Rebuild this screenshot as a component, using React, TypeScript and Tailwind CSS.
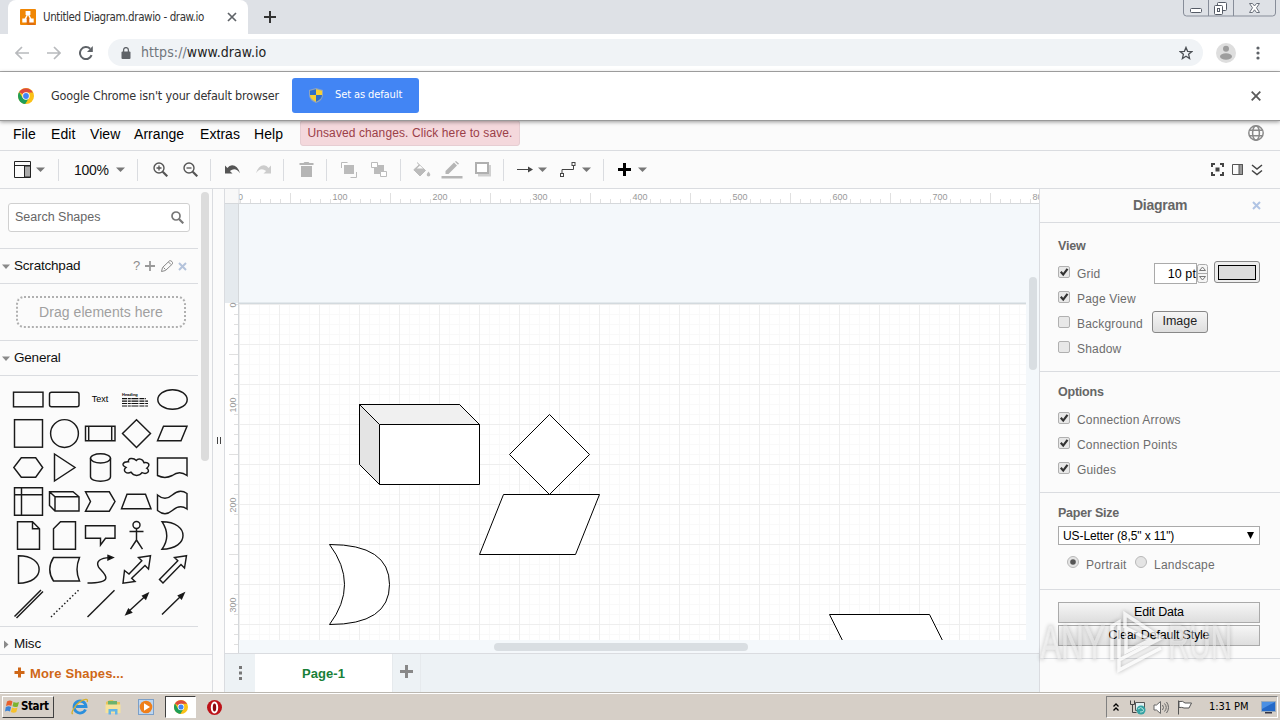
import React from "react";

const chromeFont = "font-['DejaVu_Sans_Condensed','DejaVu_Sans',sans-serif]";
const appFont = "font-['Liberation_Sans',Arial,sans-serif]";

const menus = [
  { label: "File", cls: "w-[38px]" },
  { label: "Edit", cls: "w-[39px]" },
  { label: "View", cls: "w-[44px]" },
  { label: "Arrange", cls: "w-[66px]" },
  { label: "Extras", cls: "w-[54px]" },
  { label: "Help", cls: "w-[46px]" },
];

const Caret = ({ className = "" }: { className?: string }) => (
  <svg width="9" height="5" viewBox="0 0 9 5" className={className}>
    <path d="M0 0.5h9L4.5 5z" fill="#777" />
  </svg>
);

const Sep = () => <div className="h-[22px] w-px shrink-0 bg-[#dadce0]" />;

const Tool = ({ cls, children }: { cls: string; children: React.ReactNode }) => (
  <div className={`flex h-full shrink-0 items-center ${cls}`}>{children}</div>
);

const ChromeLogo = ({ size }: { size: number }) => (
  <svg width={size} height={size} viewBox="0 0 16 16">
    <circle cx="8" cy="8" r="8" fill="#fbc116" />
    <path d="M8 8L1.1 4A8 8 0 0 1 14.9 4.4H8z" fill="#dd4b3e" />
    <path d="M1.1 4A8 8 0 0 0 7.2 16L11.1 9.8 8 8 4.7 10z" fill="#1e9e58" />
    <circle cx="8" cy="8" r="3.7" fill="#fff" />
    <circle cx="8" cy="8" r="2.9" fill="#4285f4" />
  </svg>
);

function TabStrip() {
  return (
    <div className="flex h-[34px] shrink-0 bg-[#dee1e6] pl-2">
      <div className="flex w-[240px] items-center rounded-t-lg bg-white pl-3">
        <svg width="16" height="16" viewBox="0 0 16 16">
          <rect width="16" height="16" rx="1" fill="#f08705" />
          <path d="M8 8l8 8H8L4 12z" fill="#df6c0c" />
          <path d="M8 4.5L4.5 11.5M8 4.5l3.5 7" stroke="#fff" strokeWidth="1.4" />
          <path d="M5.6 2h4.8v4H5.6zM2.3 9.5h4.4v4H2.3zM9.3 9.5h4.4v4H9.3z" fill="#fff" />
        </svg>
        <span className="ml-[7px] w-[182px] whitespace-nowrap pt-px text-[11.5px] tracking-[-0.4px] text-[#333]">
          Untitled Diagram.drawio - draw.io
        </span>
        <svg width="10" height="10" viewBox="0 0 10 10" className="ml-0.5">
          <path d="M1 1l8 8M9 1l-8 8" stroke="#5f6368" strokeWidth="1.7" />
        </svg>
      </div>
      <svg width="12" height="12" viewBox="0 0 12 12" className="ml-4 mt-[11px]">
        <path d="M6 0v12M0 6h12" stroke="#333" strokeWidth="2" />
      </svg>
      <svg width="93" height="17" viewBox="0 0 93 17" className="ml-auto mr-1" fill="none">
        <path d="M0.5 0v13q0 3 3 3h86q3 0 3-3V0M25.5 0v16M50.5 0v16" stroke="#878d99" />
        <rect x="7.5" y="8.5" width="11" height="4" rx="1" fill="#fff" stroke="#555b66" />
        <rect x="34.5" y="2.5" width="9" height="8" rx="1" fill="#fff" stroke="#555b66" />
        <rect x="31.5" y="5.5" width="8" height="9" rx="1" fill="#fff" stroke="#555b66" />
        <rect x="34.5" y="8.5" width="2" height="3" stroke="#555b66" />
        <path d="M66.5 3.5h3l2 2.5 2-2.5h3l-3 4.3 3 4.7h-3l-2-2.7-2 2.7h-3l3-4.7z" fill="#fff" stroke="#6a707b" />
      </svg>
    </div>
  );
}

function AddressBar() {
  return (
    <div className="flex h-[38px] shrink-0 items-center border-b border-[#adadad] bg-white pl-[15px]">
      <svg width="14" height="14" viewBox="0 0 14 14" fill="none" stroke="#b8babd" strokeWidth="1.7">
        <path d="M14 7H1M7 1L1 7l6 6" />
      </svg>
      <svg width="14" height="14" viewBox="0 0 14 14" fill="none" stroke="#b8babd" strokeWidth="1.7" className="ml-[18px]">
        <path d="M0 7h13M7 1l6 6-6 6" />
      </svg>
      <svg width="14" height="14" viewBox="0 0 14 14" fill="none" className="ml-[18px]">
        <path d="M12.6 9.2A6 6 0 1 1 11.2 2.8" stroke="#5f6368" strokeWidth="2" />
        <path d="M13.8 0v6H8z" fill="#5f6368" />
      </svg>
      <div className="ml-[15px] flex h-[27px] w-[1095px] items-center rounded-full bg-[#f0f3f6] pl-[13px]">
        <svg width="10" height="12" viewBox="0 0 10 12" fill="none">
          <rect x="0.5" y="4.5" width="9" height="7.5" rx="1" fill="#5f6368" />
          <path d="M2.6 5V3a2.4 2.4 0 0 1 4.8 0v2" stroke="#5f6368" strokeWidth="1.3" />
        </svg>
        <span className="ml-[10px] text-[14px] tracking-[0.08px] text-[#222]">
          <span className="text-[#71767c]">https://</span>www.draw.io
        </span>
        <svg width="14" height="14" viewBox="0 0 14 14" className="ml-auto mr-[10px]" fill="none">
          <path d="M7 1.4l1.6 3.9 4.2.3-3.2 2.7 1 4.2L7 10.2l-3.6 2.3 1-4.2L1.2 5.6l4.2-.3z" stroke="#4d5156" strokeWidth="1.3" />
        </svg>
      </div>
      <svg width="20" height="20" viewBox="0 0 20 20" className="ml-[13px]">
        <circle cx="10" cy="10" r="10" fill="#dedede" />
        <circle cx="10" cy="5.8" r="3" fill="#9d9d9d" />
        <ellipse cx="10" cy="13.5" rx="6" ry="3.2" fill="#9d9d9d" />
      </svg>
      <svg width="4" height="14" viewBox="0 0 4 14" fill="#5f6368" className="ml-[20px]">
        <circle cx="2" cy="2" r="1.6" />
        <circle cx="2" cy="7" r="1.6" />
        <circle cx="2" cy="12" r="1.6" />
      </svg>
    </div>
  );
}

function InfoBar() {
  return (
    <div className="relative z-10 flex h-[49px] shrink-0 items-center border-b border-[#999] bg-white pl-[18px] shadow-[0_1px_4px_rgba(0,0,0,0.4)]">
      <ChromeLogo size={16} />
      <span className="ml-[17px] w-[241px] whitespace-nowrap text-[12.5px] tracking-[-0.18px] text-[#333]">
        Google Chrome isn't your default browser
      </span>
      <button className="-mt-[2px] flex h-[35px] w-[127px] items-center rounded-[3px] bg-[#4285f4] pl-[17px] text-white">
        <svg width="14" height="15" viewBox="0 0 14 15">
          <path d="M7 0L0 2v5q0 5 7 8 7-3 7-8V2z" fill="#8fa3bd" />
          <path d="M7 1.2L1 2.8V7h6z" fill="#2f6fc8" />
          <path d="M7 1.2l6 1.6V7H7z" fill="#f7d034" />
          <path d="M1 7h6v6.8Q1 11 1 7z" fill="#f7d034" />
          <path d="M7 7h6q0 4-6 6.8z" fill="#2f6fc8" />
        </svg>
        <span className="ml-3 whitespace-nowrap text-[11px] tracking-[-0.1px]">Set as default</span>
      </button>
      <svg width="10" height="10" viewBox="0 0 10 10" className="ml-auto mr-[19px]">
        <path d="M0.7 0.7l8.6 8.6M9.3 0.7L0.7 9.3" stroke="#5a5a5a" strokeWidth="1.8" />
      </svg>
    </div>
  );
}

function MenuBar() {
  return (
    <div className="flex h-[30px] shrink-0 items-start border-b border-[#dadce0] bg-[#fbfbfb] pl-[13px] text-[14px] text-black">
      {menus.map((m) => (
        <span key={m.label} className={`${m.cls} pt-[3px] tracking-[0.05px]`}>
          {m.label}
        </span>
      ))}
      <span className="-mt-px flex h-[26px] w-[220px] items-center justify-center whitespace-nowrap rounded-[3px] border border-[#e6cdd2] bg-[#f4d8dc] text-[12px] tracking-[0.1px] text-[#9b4048]">
        Unsaved changes. Click here to save.
      </span>
      <svg width="16" height="16" viewBox="0 0 16 16" fill="none" stroke="#8a8a8a" strokeWidth="1.5" className="ml-auto mr-4 mt-1">
        <circle cx="8" cy="8" r="7.2" />
        <ellipse cx="8" cy="8" rx="3.4" ry="7.2" />
        <path d="M1.4 5.3h13.2M1.4 10.7h13.2" />
      </svg>
    </div>
  );
}

const Magnifier = ({ plus }: { plus?: boolean }) => (
  <svg width="15" height="15" viewBox="0 0 15 15" fill="none" stroke="#555">
    <circle cx="6" cy="6" r="5" strokeWidth="1.4" />
    <path d="M9.7 9.7l4.6 4.6" strokeWidth="2.2" />
    <path d={plus ? "M3.5 6h5M6 3.5v5" : "M3.5 6h5"} strokeWidth="1.3" />
  </svg>
);

function ToolBar() {
  return (
    <div className="flex h-[38px] shrink-0 items-center border-b border-[#dadce0] bg-[#fbfbfb]">
      <Tool cls="w-[58px] pl-[14px]">
        <svg width="17" height="17" viewBox="0 0 17 17" fill="none" stroke="#222">
          <path d="M10.5 5h6v11h-6z" fill="#aaa" />
          <path d="M0.5 0.5h16v16H0.5zM0.5 4.5h16M10.5 4.5v12" />
        </svg>
        <Caret className="ml-[5px]" />
      </Tool>
      <Sep />
      <Tool cls="w-[78px] pl-[15px]">
        <span className="w-[42px] pt-px text-[14px] tracking-[-0.3px] text-[#111]">100%</span>
        <Caret />
      </Tool>
      <Sep />
      <Tool cls="w-[72px] pl-[15px]">
        <Magnifier plus />
        <span className="w-[15px]" />
        <Magnifier />
      </Tool>
      <Sep />
      <Tool cls="w-[72px] pl-[14px]">
        <svg width="16" height="11" viewBox="0 0 16 11">
          <path d="M0 1.5v8h7.5L4.9 6.9Q10.5 2.5 15 9.3 12.5 1.2 7 1.3 4.3 1.6 2.4 4.1z" fill="#555" />
        </svg>
        <svg width="16" height="11" viewBox="0 0 16 11" className="ml-[14px]">
          <path d="M16 1.5v8H8.5L11.1 6.9Q5.5 2.5 1 9.3 3.5 1.2 9 1.3 11.7 1.6 13.6 4.1z" fill="#ccc" />
        </svg>
      </Tool>
      <Sep />
      <Tool cls="w-[42px] pl-[15px]">
        <svg width="15" height="15" viewBox="0 0 15 15" fill="#b5b5b5">
          <path d="M0.5 1h4l1-1h4l1 1h4v2h-14zM2 4h11v11H2z" />
        </svg>
      </Tool>
      <Sep />
      <Tool cls="w-[73px] pl-[14px]">
        <svg width="16" height="16" viewBox="0 0 16 16" fill="none" stroke="#bbb">
          <path d="M3 3h10v9H3z" fill="#bbb" stroke="none" />
          <path d="M0.5 6V0.5h6M15.5 10v5.5h-6" />
          <path d="M1 1h5v1.5H2.5V6H1z" fill="#fff" stroke="none" />
        </svg>
        <svg width="16" height="16" viewBox="0 0 16 16" className="ml-[14px]">
          <path d="M3 3h10v9H3z" fill="#bbb" />
          <path d="M0.5 0.5h6v5h-6zM9.5 9.5h6v5h-6z" fill="#fff" stroke="#bbb" />
        </svg>
      </Tool>
      <Sep />
      <Tool cls="w-[102px] pl-[12px]">
        <svg width="18" height="16" viewBox="0 0 18 16">
          <path d="M4 0.5l8.5 8L7 14 0.8 7.8 6 3" fill="#bbb" stroke="#bbb" />
          <path d="M3.8 6.5L7 3.4l3.2 3.1z" fill="#fbfbfb" />
          <path d="M15.5 9.5q3.5 4.5 0 5-3.5-.5 0-5z" fill="#bbb" />
        </svg>
        <svg width="22" height="18" viewBox="0 0 22 18" className="ml-[10px]" fill="#b5b5b5">
          <path d="M4.5 10L13 1.5l3 3L7.5 13h-3zM14 .8l1-.8 3 2.5-1 1.2zM0.5 15h21v2.5h-21z" />
        </svg>
        <svg width="16" height="15" viewBox="0 0 16 15" className="ml-[12px]">
          <path d="M3 3h13v11.5H3z" fill="#d0d0d0" />
          <rect x="1" y="1" width="12" height="10" fill="#fff" stroke="#b0b0b0" strokeWidth="2" />
        </svg>
      </Tool>
      <Sep />
      <Tool cls="w-[99px] pl-[13px]">
        <svg width="16" height="7" viewBox="0 0 16 7">
          <path d="M0 3.5h12" stroke="#444" />
          <path d="M11 0.5l5 3-5 3z" fill="#444" />
        </svg>
        <Caret className="ml-[5px]" />
        <svg width="16" height="15" viewBox="0 0 16 15" fill="#fff" stroke="#444" className="ml-[13px]">
          <path d="M2 12V7.5h11.5V3" fill="none" />
          <rect x="0.5" y="11.5" width="3" height="3" />
          <rect x="12" y="0.5" width="3" height="3" />
        </svg>
        <Caret className="ml-[6px]" />
      </Tool>
      <Sep />
      <Tool cls="pl-[14px]">
        <svg width="13" height="13" viewBox="0 0 13 13">
          <path d="M6.5 0v13M0 6.5h13" stroke="#000" strokeWidth="3" />
        </svg>
        <Caret className="ml-[7px]" />
      </Tool>
      <Tool cls="ml-auto pr-[17px]">
        <svg width="13" height="13" viewBox="0 0 13 13" fill="none" stroke="#444" strokeWidth="2">
          <path d="M1 4V1h3M9 1h3v3M12 9v3H9M4 12H1V9" />
          <path d="M4.5 4.5h4v4h-4z" fill="#444" stroke="none" />
        </svg>
        <svg width="11" height="11" viewBox="0 0 11 11" fill="none" stroke="#555" className="ml-[8px]">
          <path d="M7 0.5h3.5v10H7z" fill="#999" />
          <path d="M0.5 0.5h10v10h-10z" />
        </svg>
        <svg width="12" height="12" viewBox="0 0 12 12" fill="none" stroke="#444" strokeWidth="1.5" className="ml-[8px]">
          <path d="M1 1l5 4 5-4M1 6.5l5 4 5-4" />
        </svg>
      </Tool>
    </div>
  );
}

/* Palette thumbnails, each drawn in a 36x34 cell */
const thumbs: React.ReactNode[] = [
  <rect x="3.5" y="10.2" width="29.5" height="14.6" />,
  <rect x="3.5" y="10.2" width="29.5" height="14.6" rx="2" />,
  <text x="18" y="20" fontSize="9" textAnchor="middle" fill="#000" stroke="none">Text</text>,
  <g fill="#000" strokeWidth="1.2" stroke="#111">
    <text x="4" y="13.5" fontSize="4" fontWeight="bold" stroke="none">Heading</text>
    <path d="M4 16.7h24M4 19.2h26M4 21.5h26M4 24h26" strokeDasharray="5 0.8 3 0.6 7 1" />
  </g>,
  <ellipse cx="18.5" cy="17.5" rx="14.7" ry="9.8" />,
  <rect x="4.5" y="3.7" width="28" height="27.5" />,
  <circle cx="18.5" cy="17.5" r="13.9" />,
  <path d="M3.5 10.2h29.5v14.6H3.5zM6.7 10v15M29.7 10v15" />,
  <path d="M18.5 3.7L32.5 17.5l-14 13.9L4.5 17.5z" />,
  <path d="M9.5 10.2H33L27 24.8H3.5z" />,
  <path d="M11.3 7.8h14.4l7 9.7-7 9.7H11.3l-7.5-9.7z" />,
  <path d="M8.5 4v27L29 17.5z" />,
  <g>
    <path d="M8.5 8.3v18.5c0 5.9 20 5.9 20 0V8.3" />
    <ellipse cx="18.5" cy="8.3" rx="10" ry="4.6" />
  </g>,
  <path d="M10.500 11.700c-6-.3-7.500 3.800-2.500 5.700-4.200 3.200.8 7.300 5 4.800 2.800 4.400 8.700 4 11 .5 5.200 2.300 8.700-2 4.700-4.500 4.300-3.500 1.500-6.500-2.700-5.500-1.300-4.300-6-4.500-7.700-2.200-2.700-2.800-8.800-2.700-7.800 1.200z" />,
  <path d="M3.5 8h29.5v17.5q-7.5-5.500-14.7 0-7.5 3.800-14.8 0z" />,
  <path d="M4.5 3.7h28v27.5h-28zM11.5 3.7v27.5M4.5 10.7h28" />,
  <path d="M3.5 7.8h23.5l6 5V27H9l-5.500-5.500zM3.5 7.8L9 12.8h24M9 12.8V27" />,
  <path d="M3.5 7.8h23.8l5.700 9.7-5.700 9.700H3.500l5-9.700z" />,
  <path d="M9 10.200h18.500l5.500 14.600H3.500z" />,
  <path d="M3.500 11q7.500 6.500 14.800 0 7.500-6.800 14.700-1.500v15.500q-7.200-5-14.700 1.500-7.300 6.300-14.800 0z" />,
  <path d="M7.500 3.700h15l7 7v20.500h-22zM22.500 3.700v7h7" />,
  <path d="M14.500 3.700h15v27.500h-22V10.700z" />,
  <path d="M3.500 7.800h29.500v12.500h-9.500L18.500 27v-6.700h-15z" />,
  <g>
    <circle cx="18.500" cy="7" r="3.500" />
    <path d="M18.500 10.500v11.500M11.500 13.500h14M18.500 22l-6 9.200M18.500 22l6 9.200" />
  </g>,
  <path d="M8 3.700c28 0 28 27.500 0 27.500q9.500-13 0-27.500z" />,
  <path d="M8.500 3.700c27.500 0 27.500 27.500 0 27.500z" />,
  <path d="M7.500 5.500h26q-5 12 0 23.500h-26q-7.500-11.500 0-23.500z" />,
  <g>
    <path d="M5.500 31c32 0 13-12 11-16-3-6 2-9 11-9.400" />
    <path d="M26 3.500l5 2.100-5 2.200z" fill="#000" />
  </g>,
  <path d="M32.500 3.700L20.500 5.500l3.300 3.300L11 22l-4.500-3.500-1.500 12.700 12-1.700-3.300-3.300L27 13.500l3.500 3.500z" />,
  <path d="M32.500 3.700L20.500 5.500l3.300 3.300L5.500 27.500l3.500 3.500L27 12.500l3.500 3.500z" />,
  <path d="M4.500 30.500L31 4M6.500 32L33 5.500" />,
  <path d="M5 31L32.500 4.200" strokeDasharray="1.500 2.200" />,
  <path d="M5.500 31L32.500 4.200" />,
  <path d="M9.500 26.500L28 9.500M8 28.500l2.500-5.300 3 3.200zM30 7.500l-5.300 2.500 3 3z" fill="#000" />,
  <path d="M8 28.500L28 9M30 7.200l-5.500 2.500 3 3z" fill="#000" />,
];

const SectionTitle = ({ title, open, cls, children }: { title: string; open: boolean; cls: string; children?: React.ReactNode }) => (
  <div className={`flex items-center border-[#dadce0] text-[13.5px] tracking-[-0.2px] text-[#111] ${cls}`}>
    <svg width="9" height="9" viewBox="0 0 9 9" className="ml-[2px] mr-[3px]">
      <path d={open ? "M0 2.5h8l-4 4.5z" : "M2 0.5v8L6.500 4.500z"} fill="#8a8a8a" />
    </svg>
    <span>{title}</span>
    {children}
  </div>
);

function Sidebar() {
  return (
    <div className="flex w-[213px] shrink-0 flex-col border-r border-[#dadce0] bg-[#fbfbfb]">
      <div className="flex h-[465px] shrink-0">
        <div className="w-[198px]">
          <div className="h-[60px] border-b border-[#dadce0] pl-2 pt-[14px]">
            <div className="flex h-[29px] w-[182px] items-center rounded-[3px] border border-[#d0d0d0] bg-white pl-[6px] pr-[5px] text-[12.5px] text-[#666]">
              <span>Search Shapes</span>
              <svg width="13" height="13" viewBox="0 0 13 13" fill="none" stroke="#777" className="ml-auto">
                <circle cx="5" cy="5" r="4" strokeWidth="1.7" />
                <path d="M8 8l4.300 4.300" strokeWidth="2.200" />
              </svg>
            </div>
          </div>
          <SectionTitle title="Scratchpad" open cls="h-[35px] border-b">
            <div className="ml-auto mr-[11px] flex items-center text-[#8d8d8d]">
              <span className="text-[13px]">?</span>
              <svg width="10" height="10" viewBox="0 0 10 10" className="ml-[5px]">
                <path d="M5 0v10M0 5h10" stroke="#999" strokeWidth="1.800" />
              </svg>
              <svg width="12" height="12" viewBox="0 0 12 12" fill="none" stroke="#888" className="ml-[6px]">
                <path d="M0.500 11.500l1-4L8.500 .8q1.200-.5 2.500 .8t.5 2.300L4.500 10.500zM2.500 7.500l2 2M7.500 2l2.500 2.500" />
              </svg>
              <svg width="9" height="9" viewBox="0 0 9 9" className="ml-[5px]">
                <path d="M1 1l7 7M8 1L1 8" stroke="#b4c3db" strokeWidth="2" />
              </svg>
            </div>
          </SectionTitle>
          <div className="flex h-[57px] items-center border-b border-[#dadce0] pl-4">
            <div className="flex h-8 w-[170px] items-center justify-center rounded-lg border-2 border-dotted border-[#b0b0b0] text-[14px] tracking-[0.050px] text-[#a0a0a0]">
              Drag elements here
            </div>
          </div>
          <SectionTitle title="General" open cls="h-[35px] border-b" />
          <div className="grid h-[251px] grid-cols-[repeat(5,36px)] content-start border-b border-[#dadce0] pl-[10px] pt-[6px]">
            {thumbs.map((shape, i) => (
              <svg key={i} width="36" height="34" viewBox="0 0 36 34" fill="none" stroke="#1a1a1a" strokeWidth="1.450">
                {shape}
              </svg>
            ))}
          </div>
          <SectionTitle title="Misc" open={false} cls="h-[27px] pt-[8px]" />
        </div>
        <div className="ml-[3px] mt-[3px] h-[269px] w-2 rounded-full bg-[#dcdcdc]" />
      </div>
      <div className="flex flex-1 items-center border-t border-[#dadce0] pl-[14px] text-[13px] font-bold tracking-[0.150px] text-[#cf6717]">
        <svg width="11" height="11" viewBox="0 0 11 11" className="-mt-[2px]">
          <path d="M5.500 0.500v10M0.500 5.500h10" stroke="#cf6717" strokeWidth="3" />
        </svg>
        <span className="ml-[5px]">More Shapes...</span>
      </div>
    </div>
  );
}

const hTicks = Array.from({ length: 80 }, (_, i) => i);
const vTicks = Array.from({ length: 35 }, (_, i) => i);

function HorizontalRuler() {
  return (
    <svg width="814" height="15" className="block border-b border-[#d5d8db] bg-white">
      {hTicks.map((i) => (
        <path key={i} d={`M${15.5 + i * 10} ${i % 10 === 5 ? 4 : 10}V15`} stroke="#e0e0e0" />
      ))}
      <g fontSize="9" fill="#999" textAnchor="middle">
        <text x="15.500" y="11">0</text>
        {[100, 200, 300, 400, 500, 600, 700, 800].map((n) => (
          <text key={n} x={15 + n} y="11">{n}</text>
        ))}
      </g>
      <path d="M0 0h14v14H0z" fill="#f8f8f8" />
      <path d="M14 0v15" stroke="#dadce0" />
    </svg>
  );
}

function VerticalRuler() {
  return (
    <svg width="14" height="449" className="block border-r border-[#d5d8db] bg-white">
      <rect width="14" height="99" fill="#e5eaee" />
      {vTicks.map((i) => (
        <path key={i} d={`M${i % 10 === 5 ? 4 : 9} ${100.5 + i * 10}H14`} stroke="#e0e0e0" />
      ))}
      <g fontSize="9" fill="#999" textAnchor="middle">
        <text transform="translate(11 101) rotate(-90)">0</text>
        <text transform="translate(11 201) rotate(-90)">100</text>
        <text transform="translate(11 301) rotate(-90)">200</text>
        <text transform="translate(11 401) rotate(-90)">300</text>
      </g>
    </svg>
  );
}

function Drawing() {
  return (
    <svg width="787" height="436" viewBox="239 204 787 436" className="block">
      <defs>
        <pattern id="grid" x="239" y="304" width="40" height="40" patternUnits="userSpaceOnUse">
          <path d="M10.500 0v40M20.500 0v40M30.500 0v40M0 10.500h40M0 20.500h40M0 30.500h40" stroke="#f9f9f9" />
          <path d="M0.500 0v40M0 0.500h40" stroke="#eeeeee" />
        </pattern>
      </defs>
      <rect x="239" y="204" width="787" height="99" fill="#f4f8fb" />
      <rect x="239" y="303" width="787" height="337" fill="#fff" />
      <rect x="239" y="304" width="787" height="336" fill="url(#grid)" />
      <path d="M239 302.500h787" stroke="#e3e9ed" />
      <path d="M239 303.500h787" stroke="#d3dade" />
      <g fill="#fff" stroke="#000">
        <path d="M359.500 404.500h100l20 20v60h-100l-20-20z" />
        <path d="M359.500 404.500h100l20 20h-100z" fill="#f0f0f0" />
        <path d="M359.500 404.500l20 20v60l-20-20z" fill="#e4e4e4" />
        <path d="M549.500 414.500l40 40-40 40-40-40z" />
        <path d="M503.500 494.500h96l-24 60h-96z" />
        <path d="M329.500 544.500Q389.500 544.500 389.500 584.500 389.500 624.500 329.500 624.500 359.500 584.500 329.500 544.500z" />
        <path d="M829.500 614.500h100l20 40h-100z" />
      </g>
    </svg>
  );
}

function Canvas() {
  return (
    <div className="flex w-[815px] shrink-0 flex-col border-r border-[#dadce0]">
      <HorizontalRuler />
      <div className="flex h-[449px]">
        <VerticalRuler />
        <div className="w-[787px]">
          <Drawing />
          <div className="h-[13px] bg-[#f4f8fb] pl-[255px] pt-[3px]">
            <div className="h-2 w-[254px] rounded-full bg-[#d9dee2]" />
          </div>
        </div>
        <div className="flex-1 bg-[#f4f8fb] pl-[3px] pt-[73px]">
          <div className="h-[93px] w-2 rounded-full bg-[#d9dee2]" />
        </div>
      </div>
      <div className="flex flex-1 border-t border-[#dadce0] bg-[#edf2f5]">
        <div className="flex w-[30px] items-center justify-center">
          <svg width="3" height="14" viewBox="0 0 3 14" fill="#777">
            <path d="M0 0h3v3H0zM0 5.500h3v3H0zM0 11h3v3H0z" />
          </svg>
        </div>
        <div className="flex w-[137px] items-center justify-center bg-white pt-[2px] text-[13px] font-bold tracking-[0.050px] text-[#188038]">
          Page-1
        </div>
        <div className="flex w-[29px] justify-center border-x border-[#e6eaed] pt-[11px]">
          <svg width="13" height="13" viewBox="0 0 13 13">
            <path d="M6.500 0v13M0 6.500h13" stroke="#888" strokeWidth="3" />
          </svg>
        </div>
      </div>
    </div>
  );
}

const CheckRow = ({ label, checked, children }: { label: string; checked?: boolean; children?: React.ReactNode }) => (
  <div className="flex h-[25px] items-center">
    <svg width="12" height="12" viewBox="0 0 12 12" className="-mt-1 shrink-0">
      <rect x="0.500" y="0.500" width="11" height="11" rx="1.500" fill="#e8e8e8" stroke="#b0b0b0" />
      {checked && <path d="M2.800 5.800l2.400 2.800L9.500 2.800" fill="none" stroke="#333" strokeWidth="2.200" />}
    </svg>
    <span className="ml-[7px] whitespace-nowrap text-[12px] tracking-[0.180px] text-[#6d6d6d]">{label}</span>
    {children}
  </div>
);

const Radio = ({ checked }: { checked?: boolean }) => (
  <svg width="12" height="12" viewBox="0 0 12 12" className="-mt-1">
    <circle cx="6" cy="6" r="5.500" fill="#e4e4e4" stroke="#b8b8b8" />
    {checked && <circle cx="6" cy="6" r="2.800" fill="#555" />}
  </svg>
);

const PanelTitle = ({ children }: { children: React.ReactNode }) => (
  <div className="text-[12.500px] font-bold leading-[16px] tracking-[-0.220px] text-[#666]">{children}</div>
);

const wideButton = "h-[21px] w-[202px] border border-[#aaa] bg-linear-to-b from-[#f6f6f6] to-[#dedede] text-[12.500px] leading-[19px] tracking-[-0.180px] text-black";

function FormatPanel() {
  return (
    <div className="flex flex-1 flex-col bg-[#fbfbfb]">
      <div className="flex h-[34px] items-center border-b border-[#dadce0] pr-[19px]">
        <span className="ml-[93px] text-[14px] font-bold tracking-[-0.250px] text-[#666]">Diagram</span>
        <svg width="9" height="9" viewBox="0 0 9 9" className="-mt-px ml-auto">
          <path d="M1 1l7 7M8 1L1 8" stroke="#b0c4e4" strokeWidth="2" />
        </svg>
      </div>
      <div className="h-[149px] border-b border-[#dadce0] pl-[18px] pt-[15px]">
        <PanelTitle>View</PanelTitle>
        <div className="pt-[7px]">
          <CheckRow label="Grid" checked>
            <div className="ml-auto mr-5 flex items-center">
              <div className="h-[21px] w-[43px] border border-[#aaa] bg-white text-right text-[12.500px] leading-[20px] tracking-[0.100px] text-black">10 pt</div>
              <svg width="11" height="19" viewBox="0 0 11 19" fill="#f5f5f5" stroke="#aaa">
                <rect x="0.500" y="0.500" width="10" height="18" rx="2" />
                <path d="M0.500 9.500h10" />
                <path d="M2.500 6.500l3-3.500 3 3.500zM2.500 12.500l3 3.500 3-3.500z" stroke="#777" />
              </svg>
              <div className="-mt-[3px] ml-[6px] flex h-[22px] w-[46px] items-center justify-center rounded-[3px] border border-[#888] bg-[#eee]">
                <div className="h-[15px] w-[38px] border border-black bg-[#ddd]" />
              </div>
            </div>
          </CheckRow>
          <CheckRow label="Page View" checked />
          <CheckRow label="Background">
            <div className="-mt-[4px] ml-[9px] h-[22px] w-[56px] rounded-[3px] border border-[#888] bg-linear-to-b from-[#f6f6f6] to-[#dedede] text-center text-[12.500px] leading-[19px] text-[#222]">
              Image
            </div>
          </CheckRow>
          <CheckRow label="Shadow" />
        </div>
      </div>
      <div className="h-[121px] border-b border-[#dadce0] pl-[18px] pt-3">
        <PanelTitle>Options</PanelTitle>
        <div className="pt-[7px]">
          <CheckRow label="Connection Arrows" checked />
          <CheckRow label="Connection Points" checked />
          <CheckRow label="Guides" checked />
        </div>
      </div>
      <div className="h-[97px] border-b border-[#dadce0] pl-[18px] pt-3">
        <PanelTitle>Paper Size</PanelTitle>
        <div className="mt-[5px] flex h-[19px] w-[202px] items-center border border-[#aaa] bg-white pl-1 pr-[5px] text-[12px] tracking-[-0.080px] text-black">
          <span>US-Letter (8,5" x 11")</span>
          <svg width="7" height="7" viewBox="0 0 7 7" className="-mt-px ml-auto">
            <path d="M0 0h7L3.500 7z" />
          </svg>
        </div>
        <div className="mt-[7px] flex h-[24px] items-center pl-[9px] text-[12px] tracking-[0.250px] text-[#6d6d6d]">
          <Radio checked />
          <span className="ml-[7px] w-[49px] pt-px">Portrait</span>
          <Radio />
          <span className="ml-[7px] pt-px">Landscape</span>
        </div>
      </div>
      <div className="flex h-[69px] flex-col gap-[2px] border-b border-[#dadce0] pl-[18px] pt-3">
        <button className={wideButton}>Edit Data</button>
        <button className={wideButton}>Clear Default Style</button>
      </div>
    </div>
  );
}

function Watermark() {
  return (
    <svg width="240" height="80" viewBox="0 0 240 80" className="pointer-events-none absolute left-[1036px] top-[606px] opacity-75 drop-shadow-[0_0_2px_rgba(0,0,0,0.4)]">
      <g fill="#fff" fillOpacity="0.500" stroke="#e2e2e2" strokeWidth="0.800" fontSize="49">
        <text x="4" y="53" textLength="65" lengthAdjust="spacingAndGlyphs">ANY</text>
        <text x="132" y="53" textLength="64" lengthAdjust="spacingAndGlyphs">RUN</text>
      </g>
      <path d="M76 54V20l7-4v36M89 22v-14l36 24-42 22v10l42-22M90 22l24 12-24 12z" fill="none" stroke="#fff" strokeWidth="3.500" strokeOpacity="0.900" />
    </svg>
  );
}

function Taskbar() {
  return (
    <div className={`flex h-[28px] shrink-0 items-center border-t border-[#bbb7b0] bg-[#d6cfc7] pl-[2px] pt-px shadow-[inset_0_1px_0_#fff] ${chromeFont}`}>
      <div className="flex h-[22px] w-[52px] items-center border border-b-[#404040] border-l-white border-r-[#404040] border-t-white bg-[#d6cfc7] pl-[2px]">
        <svg width="15" height="14" viewBox="0 0 15 14">
          <path d="M2 1.500q3-2 5.500 0L6.300 6Q4 4.500 1 6z" fill="#e8602c" />
          <path d="M8.500 2q3 1.500 5.500 0l-1.200 4.500q-2.800 1.300-5.300-.2z" fill="#7bb32e" />
          <path d="M0.800 7q3-1.500 5.300 0L5 11.500q-2.500-1.500-5 0z" fill="#3b83d6" />
          <path d="M7 7.500q2.800 1.500 5.500 0L11.300 12q-2.500 1.500-5.500 0z" fill="#f6c12c" />
        </svg>
        <span className="ml-px text-[11.500px] font-bold tracking-[-0.400px] text-black">Start</span>
      </div>
      <svg width="18" height="18" viewBox="0 0 18 18" fill="none" className="ml-[17px]">
        <path d="M14.500 11.500A6 6 0 1 1 15 8.500H5" stroke="#2b8fdc" strokeWidth="2.800" />
        <path d="M2 15.500C-1 17 3 8 8.500 4S18 1 16 4" stroke="#d6b02c" strokeWidth="1.300" />
      </svg>
      <svg width="17" height="16" viewBox="0 0 17 16" className="ml-[16px]">
        <path d="M1 3l4-2h3l1 2h6v10H1z" fill="#e8c35a" />
        <path d="M3 2h9v4H3z" fill="#6cb26d" />
        <path d="M0.500 5.500h15V14H.5z" fill="#f7e29a" />
        <path d="M3.500 15.500V10h9v5.500h-2.500v-3H6v3z" fill="#63b5e6" />
      </svg>
      <svg width="16" height="16" viewBox="0 0 16 16" className="ml-[16px]">
        <rect x="0.500" y="0.500" width="15" height="15" fill="#bdd6f0" stroke="#7b9fc8" />
        <circle cx="8" cy="8" r="6.300" fill="#ef7f1a" />
        <path d="M6 4.300v7.400L12 8z" fill="#fff" />
      </svg>
      <div className="ml-[11px] flex h-[22px] w-[31px] items-center justify-center border border-b-white border-l-[#404040] border-r-white border-t-[#404040] bg-white">
        <ChromeLogo size={14} />
      </div>
      <svg width="15" height="15" viewBox="0 0 15 15" className="ml-[11px]">
        <circle cx="7.500" cy="7.500" r="7.500" fill="#bd1218" />
        <ellipse cx="7.500" cy="7.500" rx="2.700" ry="5" fill="#8c090f" stroke="#fff" strokeWidth="2" />
      </svg>
      <div className="ml-auto mr-[2px] flex h-[22px] w-[172px] items-center border border-b-white border-l-[#808080] border-r-white border-t-[#808080] pl-[6px]">
        <svg width="6" height="8" viewBox="0 0 6 8" fill="none" stroke="#000" strokeWidth="1.300">
          <path d="M0.500 3.500L3 1l2.500 2.500M0.500 7.500L3 5l2.500 2.500" />
        </svg>
        <svg width="16" height="15" viewBox="0 0 16 15" className="ml-[11px]">
          <path d="M5.500 2.500h9v8h-9z" fill="#dff0f2" stroke="#555" />
          <path d="M0.500 0.500v4h4v-4M2.500 4.500v8h4" fill="none" stroke="#444" />
          <circle cx="11" cy="10" r="4.500" fill="#35a2a3" />
          <path d="M8 9q3-3 5 0t-3 3" stroke="#b9e6df" fill="none" />
        </svg>
        <svg width="16" height="15" viewBox="0 0 16 15" fill="none" stroke="#666" className="ml-[7px]">
          <path d="M1 5h2.500L7.500 1.500v12L3.500 10H1z" fill="#fff" />
          <path d="M9.500 5q2 2.500 0 5M11.500 3.500q3.500 4 0 8M13.500 2q4 5.500 0 11" />
        </svg>
        <svg width="16" height="15" viewBox="0 0 16 15" fill="#fff" stroke="#555" className="ml-[8px]">
          <path d="M1.500 0.500v14M2 1.500q4-1 6 1.500h6.500l-2.500 5H7Q5 7 2 7.500z" />
        </svg>
        <span className="ml-4 whitespace-nowrap text-[11px] tracking-[-0.050px] text-black">1:31 PM</span>
        <svg width="15" height="14" viewBox="0 0 15 14" className="ml-auto mr-px">
          <path d="M0.500 1.500h14v10H.5z" fill="#2469c8" stroke="#9ab" />
          <path d="M1 2h13L1 9z" fill="#4b90e4" />
          <path d="M4 12h7v1.500H4z" fill="#334" />
        </svg>
      </div>
    </div>
  );
}

export default function App() {
  return (
    <div className={`relative flex h-[720px] w-[1280px] flex-col overflow-hidden bg-white ${appFont}`}>
      <div className={`flex shrink-0 flex-col ${chromeFont}`}>
        <TabStrip />
        <AddressBar />
        <InfoBar />
      </div>
      <MenuBar />
      <ToolBar />
      <div className="flex h-[503px] shrink-0">
        <Sidebar />
        <div className="flex w-3 shrink-0 items-center justify-center border-r border-[#dadce0] bg-[#fbfbfb]">
          <svg width="4" height="7" viewBox="0 0 4 7">
            <path d="M0.500 0v7M3.500 0v7" stroke="#444" />
          </svg>
        </div>
        <Canvas />
        <FormatPanel />
      </div>
      <Taskbar />
      <Watermark />
    </div>
  );
}
